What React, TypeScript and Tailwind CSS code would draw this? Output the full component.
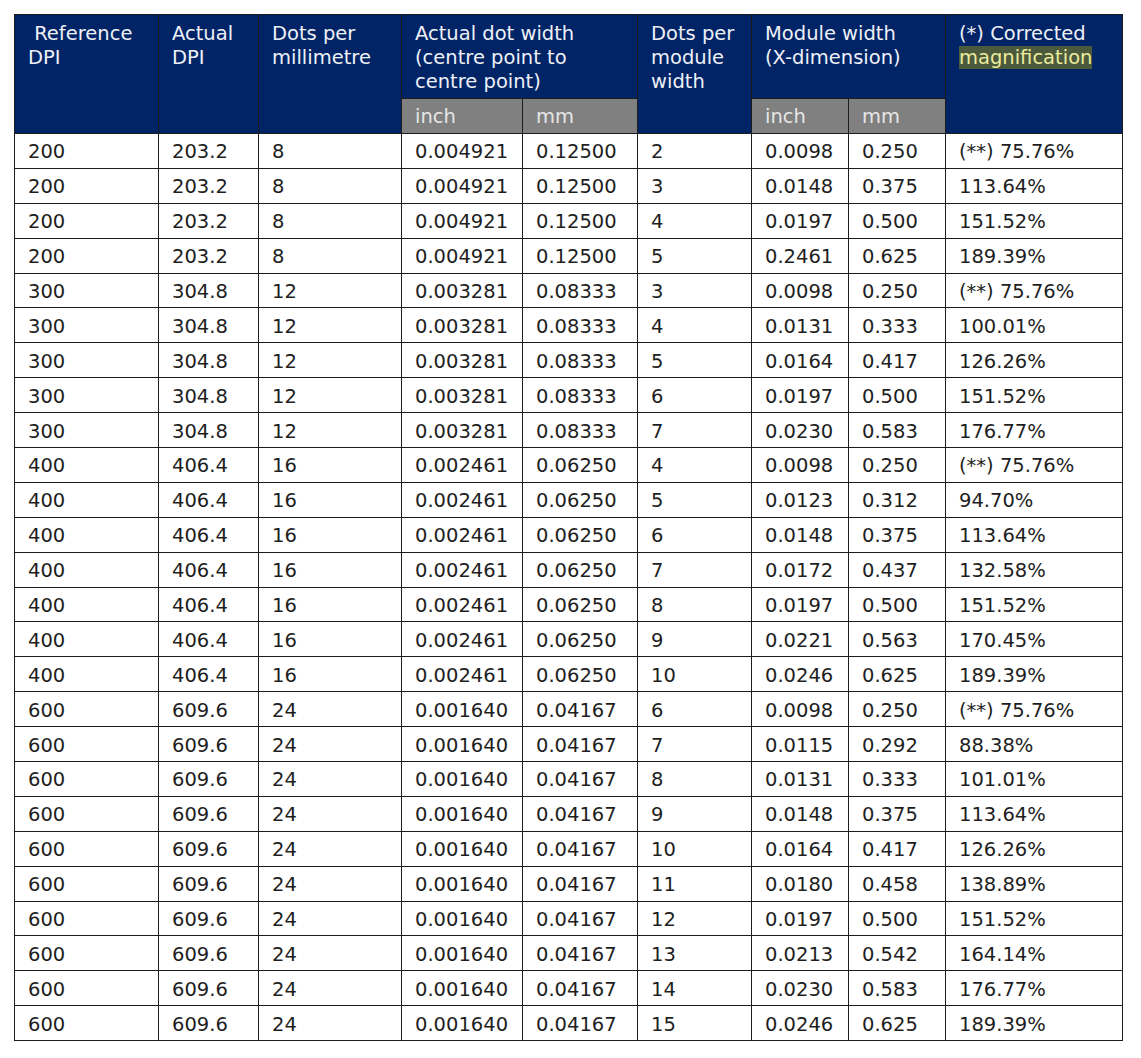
import React from "react";

type Row = [string, string, string, string, string, string, string, string, string];

const groups: { ref: string; act: string; dpm: string; inch: string; mm: string; items: [string, string, string, string][] }[] = [
  {
    ref: "200", act: "203.2", dpm: "8", inch: "0.004921", mm: "0.12500",
    items: [
      ["2", "0.0098", "0.250", "(**) 75.76%"],
      ["3", "0.0148", "0.375", "113.64%"],
      ["4", "0.0197", "0.500", "151.52%"],
      ["5", "0.2461", "0.625", "189.39%"],
    ],
  },
  {
    ref: "300", act: "304.8", dpm: "12", inch: "0.003281", mm: "0.08333",
    items: [
      ["3", "0.0098", "0.250", "(**) 75.76%"],
      ["4", "0.0131", "0.333", "100.01%"],
      ["5", "0.0164", "0.417", "126.26%"],
      ["6", "0.0197", "0.500", "151.52%"],
      ["7", "0.0230", "0.583", "176.77%"],
    ],
  },
  {
    ref: "400", act: "406.4", dpm: "16", inch: "0.002461", mm: "0.06250",
    items: [
      ["4", "0.0098", "0.250", "(**) 75.76%"],
      ["5", "0.0123", "0.312", "94.70%"],
      ["6", "0.0148", "0.375", "113.64%"],
      ["7", "0.0172", "0.437", "132.58%"],
      ["8", "0.0197", "0.500", "151.52%"],
      ["9", "0.0221", "0.563", "170.45%"],
      ["10", "0.0246", "0.625", "189.39%"],
    ],
  },
  {
    ref: "600", act: "609.6", dpm: "24", inch: "0.001640", mm: "0.04167",
    items: [
      ["6", "0.0098", "0.250", "(**) 75.76%"],
      ["7", "0.0115", "0.292", "88.38%"],
      ["8", "0.0131", "0.333", "101.01%"],
      ["9", "0.0148", "0.375", "113.64%"],
      ["10", "0.0164", "0.417", "126.26%"],
      ["11", "0.0180", "0.458", "138.89%"],
      ["12", "0.0197", "0.500", "151.52%"],
      ["13", "0.0213", "0.542", "164.14%"],
      ["14", "0.0230", "0.583", "176.77%"],
      ["15", "0.0246", "0.625", "189.39%"],
    ],
  },
];

const rows: Row[] = groups.flatMap((g) =>
  g.items.map((it) => [g.ref, g.act, g.dpm, g.inch, g.mm, it[0], it[1], it[2], it[3]] as Row)
);

const widths = [144, 100, 143, 121, 115, 114, 97, 97, 177];

const hb = "border border-[#1c1c1c] bg-[#002466] text-[#eef0f6] align-top pl-[13px] pr-[2px] pt-[7px] font-normal text-left";
const gb = "border border-[#1c1c1c] bg-[#808080] text-[#e6e6e6] align-middle pl-[13px] pt-[2px] font-normal text-left";
const td = "border border-[#1c1c1c] pl-[13px] pt-[3px] align-middle text-[#1e1e1e] whitespace-nowrap";

export default function App() {
  return (
    <div className="min-h-[1058px] w-[1141px] bg-white pt-[14px] pl-[14px]" style={{ fontFamily: "'DejaVu Sans', Verdana, sans-serif" }}>
      <table className="table-fixed border-collapse w-[1108px] text-[19.5px] leading-[24px]">
        <colgroup>
          {widths.map((w, i) => (
            <col key={i} style={{ width: w }} />
          ))}
        </colgroup>
        <thead>
          <tr className="h-[84px]">
            <th rowSpan={2} className={hb}>
              &nbsp;Reference<br />DPI
            </th>
            <th rowSpan={2} className={hb}>
              Actual<br />DPI
            </th>
            <th rowSpan={2} className={hb}>
              Dots per<br />millimetre
            </th>
            <th colSpan={2} className={hb}>
              Actual dot width<br />(centre point to<br />centre point)
            </th>
            <th rowSpan={2} className={hb}>
              Dots per<br />module<br />width
            </th>
            <th colSpan={2} className={hb}>
              Module width<br />(X-dimension)
            </th>
            <th rowSpan={2} className={hb}>
              (*) Corrected<br />
              <span className="bg-[#4b5a3c] text-[#ecec9c]">magnification</span>
            </th>
          </tr>
          <tr className="h-[35px]">
            <th className={gb}>inch</th>
            <th className={gb}>mm</th>
            <th className={gb}>inch</th>
            <th className={gb}>mm</th>
          </tr>
        </thead>
        <tbody>
          {rows.map((r, i) => (
            <tr key={i} className="h-[34.9px]">
              {r.map((c, j) => (
                <td key={j} className={td}>
                  {c}
                </td>
              ))}
            </tr>
          ))}
        </tbody>
      </table>
    </div>
  );
}
